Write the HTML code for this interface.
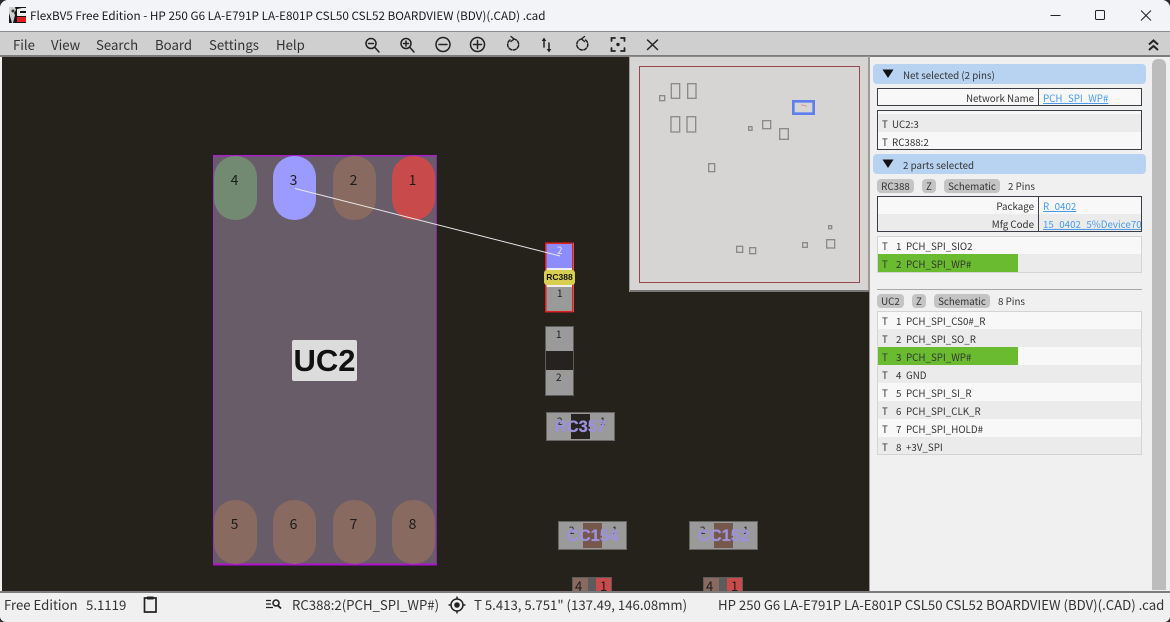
<!DOCTYPE html>
<html><head><meta charset="utf-8">
<style>
html,body{margin:0;padding:0;width:1170px;height:622px;overflow:hidden;background:#2a2a2a}
*{box-sizing:border-box}
#w{position:absolute;left:0;top:0;width:1170px;height:622px;background:#f0f0f0;overflow:hidden;border-radius:8px 8px 6px 6px;font-family:"Noto Sans CJK JP","Liberation Sans",sans-serif;color:#222}
.a{position:absolute;white-space:nowrap}
.r{position:absolute}
.m{top:35px;font-size:13.2px;line-height:20px;color:#333}
.s{font-size:9.75px;line-height:14px;color:#333}
.l{font-size:9.75px;line-height:14px;color:#4a9bea;text-decoration:underline}
.b{position:absolute;height:14px;background:#c4c4c4;border-radius:4px;font-size:9.75px;line-height:15px;text-align:center;color:#333}
.row{position:absolute;left:878px;width:263px;height:18px}
.row span{position:absolute;top:2px;font-size:9.75px;line-height:14px;color:#333;white-space:nowrap}
.st{font-size:13.2px;line-height:18px;color:#333;top:596px}
.pn{position:absolute;width:43px;height:64px;border-radius:21px;font-size:14px;line-height:18px;text-align:center;padding-top:15px;padding-right:2px;color:#1c1c1c;background:#896a60}
.pc{position:absolute;height:29px;width:69px;background:#9a9a9a;border:1px solid #666664}
.pc i{position:absolute;left:24px;top:1px;width:19px;height:25px}
.pc b{position:absolute;left:0;width:67px;top:2px;text-align:center;font:bold 16.500px/24px "Liberation Sans",sans-serif;color:#9c92da;-webkit-text-stroke:.3px #9c92da}
.pc u{position:absolute;top:2px;font-size:10px;line-height:12px;text-decoration:none;color:#1c1c1c}
</style></head><body><div id="w">

<!-- title bar -->
<div class="r" style="left:0;top:0;width:1170px;height:31px;background:#f3f4f7"></div>
<svg class="r" style="left:9px;top:7px" width="17" height="16" viewBox="0 0 17 16"><rect width="17" height="16" fill="#151515"/><path d="M0 0h6l1 3-2 3 1 2-2 8H3L0 6z" fill="#cfcfcf"/><circle cx="4" cy="4" r="1.500" fill="#333"/><path d="M8 2l5-1h4v3h-6v2h6v3H8z" fill="#eee"/><rect x="8" y="10" width="9" height="5" fill="#e02020"/></svg>
<div class="a" style="left:30px;top:7px;font-size:11.7px;line-height:18px;color:#1a1a1a">FlexBV5 Free Edition - HP 250 G6 LA-E791P LA-E801P CSL50 CSL52 BOARDVIEW (BDV)(.CAD) .cad</div>
<svg class="r" style="left:1040px;top:0" width="130" height="31" viewBox="0 0 130 31" fill="none" stroke="#222" stroke-width="1"><path d="M10.500 15.500h10"/><rect x="55.500" y="10.500" width="9" height="9" rx="1.200"/><path d="M101 10.500l10 10M111 10.500l-10 10"/></svg>

<!-- menu bar -->
<div class="r" style="left:0;top:31px;width:1170px;height:26px;background:#cfcfcf;border-top:1px solid #8a8a8a;border-bottom:2px solid #7c7c7c"></div>
<div class="a m" style="left:13px">File</div>
<div class="a m" style="left:51px">View</div>
<div class="a m" style="left:96px">Search</div>
<div class="a m" style="left:155px">Board</div>
<div class="a m" style="left:209px">Settings</div>
<div class="a m" style="left:276px">Help</div>
<svg class="r" style="left:360px;top:34px" width="310" height="22" viewBox="0 0 310 22" fill="none" stroke="#222" stroke-width="1.500" stroke-linecap="round">
<circle cx="11" cy="9.500" r="5"/><path d="M15 13.500l4 4.500M8.500 9.500h5"/>
<circle cx="46" cy="9.500" r="5"/><path d="M50 13.500l4 4.500M43.500 9.500h5M46 7v5"/>
<circle cx="83" cy="10.500" r="7"/><path d="M79 10.500h8"/>
<circle cx="117.500" cy="10.500" r="7"/><path d="M113.500 10.500h8M117.500 6.500v8"/>
<path d="M153.500 5a5.500 5.500 0 1 1-3.500 1" stroke-dasharray="3 1.600"/><path d="M151 2.500l3 2.500-3 2.500" stroke-width="1.400"/>
<path d="M184 13V6M189 9v7" stroke-width="1.500"/><path d="M184 3.500l-2.300 3.500h4.600zM189 18.500l-2.300-3.500h4.600z" fill="#222" stroke="none"/>
<path d="M222 5a5.500 5.500 0 1 0 3.500 1" stroke-dasharray="3 1.600"/><path d="M224.500 2.500l-3 2.500 3 2.500" stroke-width="1.400"/>
<path d="M251.500 7V4h3.500M261 4h3.500v3M264.500 14v3h-3.500M255 17h-3.500v-3" stroke-width="1.800"/><circle cx="258" cy="10.500" r="1.700" fill="#222" stroke="none"/>
<path d="M287.500 6l10 9.500M297.500 6l-10 9.500"/></svg>
<svg class="r" style="left:1146px;top:37px" width="16" height="16" viewBox="0 0 16 16" fill="none" stroke="#222" stroke-width="2"><path d="M3 7.500l4.500-4 4.500 4M3 13l4.500-4 4.500 4"/></svg>

<!-- canvas -->
<div class="r" style="left:2px;top:57px;width:867px;height:534px;background:#25221c"></div>

<!-- UC2 -->
<div class="r" style="left:213px;top:155px;width:223px;height:410px;background:#685c68"></div>
<svg class="r" style="left:212px;top:154px" width="226" height="413" fill="none"><path d="M1.700 2v409.500M224 2v409.500" stroke="#8c3fae" stroke-width="1.400"/><path d="M1 1.750h224" stroke="#a820c8" stroke-width="1.500"/><path d="M1 410.500h224" stroke="#b010d0" stroke-width="2"/></svg>
<div class="pn" style="left:214px;top:156px;background:#728a72">4</div>
<div class="pn" style="left:273px;top:156px;background:#9a9aff">3</div>
<div class="pn" style="left:333px;top:156px">2</div>
<div class="pn" style="left:392px;top:156px;background:#c94a4a">1</div>
<div class="pn" style="left:214px;top:500px">5</div>
<div class="pn" style="left:273px;top:500px">6</div>
<div class="pn" style="left:333px;top:500px">7</div>
<div class="pn" style="left:392px;top:500px">8</div>
<div class="a" style="left:292px;top:340px;width:65px;height:41px;background:#dcdcdc;border-radius:2px;text-align:center;font:bold 31px/41px 'Liberation Sans',sans-serif;color:#111">UC2</div>

<!-- RC388 -->
<div class="r" style="left:545px;top:243px;width:29px;height:69px;background:#9a9a9a"></div>
<div class="r" style="left:546px;top:244px;width:27px;height:24px;background:#8c8cff"></div>
<div class="r" style="left:546px;top:268px;width:27px;height:19px;background:#efefef"></div>
<svg class="r" style="left:544px;top:242px" width="32" height="72"><rect x="1.750" y="1.200" width="27" height="68.500" fill="none" stroke="#e02020" stroke-width="1.500"/></svg>
<div class="a" style="left:557px;top:243px;font-size:10px;line-height:13px;color:#e8e8ff">2</div>
<div class="a" style="left:557px;top:286px;font-size:10px;line-height:13px;color:#1c1c1c">1</div>
<div class="a" style="left:544px;top:270px;width:31px;height:15px;background:#d8cf50;border-radius:3px;text-align:center;font:bold 8.500px/15px 'Liberation Sans',sans-serif;color:#111">RC388</div>

<!-- second vertical -->
<div class="r" style="left:545px;top:326px;width:29px;height:70px;background:#9a9a9a;border:1px solid #5c5c5a"></div>
<div class="r" style="left:546px;top:351px;width:27px;height:19px;background:#25221f"></div>
<div class="a" style="left:556px;top:327px;font-size:10px;line-height:13px;color:#1c1c1c">1</div>
<div class="a" style="left:556px;top:370px;font-size:10px;line-height:13px;color:#1c1c1c">2</div>

<!-- RC357 -->
<div class="pc" style="left:546px;top:412px"><i style="background:#25221f"></i><u style="left:10px">2</u><u style="left:53px">1</u><b>RC357</b></div>
<!-- CC154 / CC152 -->
<div class="pc" style="left:558px;top:521px"><i style="background:#75574c"></i><u style="left:10px">2</u><u style="left:53px">1</u><b>CC154</b></div>
<div class="pc" style="left:689px;top:521px"><i style="background:#75574c"></i><u style="left:10px">2</u><u style="left:53px">1</u><b>CC152</b></div>

<!-- bottom parts -->
<div class="r" style="left:572px;top:577px;width:40px;height:14px;background:#5c5c5c;border:1px solid #5c5c5a;border-bottom:0"></div>
<div class="r" style="left:573px;top:578px;width:15px;height:13px;background:#896a60"></div>
<div class="r" style="left:596px;top:578px;width:15px;height:13px;background:#c94a4a"></div>
<div class="a" style="left:575px;top:577px;font-size:13px;line-height:18px;color:#1c1c1c">4</div>
<div class="a" style="left:600px;top:577px;font-size:13px;line-height:18px;color:#1c1c1c">1</div>
<div class="r" style="left:703px;top:577px;width:40px;height:14px;background:#5c5c5c;border:1px solid #5c5c5a;border-bottom:0"></div>
<div class="r" style="left:704px;top:578px;width:15px;height:13px;background:#896a60"></div>
<div class="r" style="left:727px;top:578px;width:15px;height:13px;background:#c94a4a"></div>
<div class="a" style="left:706px;top:577px;font-size:13px;line-height:18px;color:#1c1c1c">4</div>
<div class="a" style="left:731px;top:577px;font-size:13px;line-height:18px;color:#1c1c1c">1</div>

<!-- net line -->
<svg class="r" style="left:0;top:0" width="870" height="400"><path d="M295 188.500L560 256" stroke="#e8e8e8" stroke-width="1"/></svg>

<!-- minimap -->
<div class="r" style="left:629px;top:56px;width:1px;height:236px;background:#9a9a9a"></div>
<svg class="r" style="left:630px;top:56px" width="240" height="236" viewBox="0 0 720 708">
<rect x="0" y="3" width="720" height="705" fill="#d6d5d3"/>
<rect x="0" y="0" width="720" height="3" fill="#8a8a8a"/>
<rect x="714" y="0" width="6" height="708" fill="#9a9a9a"/>
<rect x="0" y="702" width="720" height="6" fill="#777"/>
<rect x="28.500" y="31.500" width="660" height="648" fill="none" stroke="#934a4c" stroke-width="3"/>
<g fill="none" stroke="#8a8a8a" stroke-width="4">
<rect x="89" y="119" width="15" height="15"/>
<rect x="124" y="83" width="25" height="44"/>
<rect x="173" y="83" width="25" height="44"/>
<rect x="123" y="182" width="26" height="46"/>
<rect x="171" y="182" width="26" height="46"/>
<rect x="356" y="212" width="10" height="11"/>
<rect x="398" y="194" width="24" height="24"/>
<rect x="449" y="218" width="26" height="32"/>
<rect x="236" y="323" width="18" height="24"/>
<rect x="596" y="509" width="9" height="9"/>
<rect x="590" y="551" width="24" height="25"/>
<rect x="518" y="560" width="14" height="14"/>
<rect x="320" y="571" width="18" height="18"/>
<rect x="359" y="575" width="18" height="18"/>
</g>
<rect x="490" y="136" width="61" height="37" fill="none" stroke="#5f7ff0" stroke-width="8"/>
<path d="M514 146l16 5" stroke="#e08a90" stroke-width="3"/>
</svg>

<!-- right panel -->
<div class="r" style="left:869px;top:57px;width:301px;height:534px;background:#f0f0f0;border-left:1px solid #9a9a9a"></div>
<div class="r" style="left:1152px;top:59px;width:14px;height:531px;background:#bcbcbc;border-radius:6px 6px 0 0"></div>

<div class="r" style="left:873px;top:64px;width:273px;height:20px;background:#b8d3f1;border-radius:4px"></div>
<svg class="r" style="left:882px;top:69px" width="12" height="10"><path d="M0.500 0.500h11L6 9z" fill="#111"/></svg>
<div class="a s" style="left:903px;top:68px">Net selected (2 pins)</div>

<div class="r" style="left:877px;top:88px;width:265px;height:18px;background:#f8f8f8;border:1px solid #3a3d44"></div>
<div class="r" style="left:1038px;top:88px;width:1px;height:18px;background:#3a3d44"></div>
<div class="a s" style="right:136px;top:91px">Network Name</div>
<div class="a l" style="left:1043px;top:91px">PCH_SPI_WP#</div>

<div class="r" style="left:877px;top:110px;width:265px;height:40px;background:#f8f8f8;border:1px solid #3a3d44"></div>
<div class="r" style="left:878px;top:114px;width:263px;height:18px;background:#ebebeb"></div>
<div class="a s" style="left:882px;top:117px">T</div><div class="a s" style="left:892px;top:117px">UC2:3</div>
<div class="a s" style="left:882px;top:135px">T</div><div class="a s" style="left:892px;top:135px">RC388:2</div>

<div class="r" style="left:873px;top:154px;width:273px;height:20px;background:#b8d3f1;border-radius:4px"></div>
<svg class="r" style="left:882px;top:159px" width="12" height="10"><path d="M0.500 0.500h11L6 9z" fill="#111"/></svg>
<div class="a s" style="left:903px;top:158px">2 parts selected</div>

<div class="b" style="left:877px;top:178.500px;width:37px">RC388</div>
<div class="b" style="left:922px;top:178.500px;width:14px">Z</div>
<div class="b" style="left:944px;top:178.500px;width:56px">Schematic</div>
<div class="a s" style="left:1008px;top:179px">2 Pins</div>

<div class="r" style="left:877px;top:196px;width:265px;height:36px;background:#f8f8f8;border:1px solid #3a3d44"></div>
<div class="r" style="left:878px;top:214px;width:263px;height:17px;background:#ebebeb"></div>
<div class="r" style="left:1038px;top:196px;width:1px;height:36px;background:#3a3d44"></div>
<div class="a s" style="right:136px;top:199px">Package</div>
<div class="a l" style="left:1043px;top:199px">R_0402</div>
<div class="a s" style="right:136px;top:217px">Mfg Code</div>
<div class="a l" style="left:1043px;top:217px;width:98px;overflow:hidden">15_0402_5%Device700</div>

<div class="r" style="left:877px;top:236px;width:265px;height:37px;background:#f8f8f8;border:1px solid #d4d4d4"></div>
<div class="row" style="top:254px;background:#ebebeb;height:18px"></div>
<div class="r" style="left:878px;top:254px;width:140px;height:18px;background:#6abb30"></div>
<div class="row" style="top:237px"><span style="left:4px">T</span><span style="left:18px">1</span><span style="left:28px">PCH_SPI_SIO2</span></div>
<div class="row" style="top:255px"><span style="left:4px">T</span><span style="left:18px">2</span><span style="left:28px">PCH_SPI_WP#</span></div>

<div class="r" style="left:877px;top:289px;width:265px;height:1px;background:#a8a8a8"></div>

<div class="b" style="left:877px;top:293.500px;width:27px">UC2</div>
<div class="b" style="left:912px;top:293.500px;width:14px">Z</div>
<div class="b" style="left:934px;top:293.500px;width:56px">Schematic</div>
<div class="a s" style="left:998px;top:294px">8 Pins</div>

<div class="r" style="left:877px;top:311px;width:265px;height:144px;background:#f8f8f8;border:1px solid #d4d4d4"></div>
<div class="row" style="top:329px;background:#ebebeb"></div>
<div class="row" style="top:365px;background:#ebebeb"></div>
<div class="row" style="top:401px;background:#ebebeb"></div>
<div class="row" style="top:437px;background:#ebebeb;height:17px"></div>
<div class="r" style="left:878px;top:347px;width:140px;height:18px;background:#6abb30"></div>
<div class="row" style="top:312px"><span style="left:4px">T</span><span style="left:18px">1</span><span style="left:28px">PCH_SPI_CS0#_R</span></div>
<div class="row" style="top:330px"><span style="left:4px">T</span><span style="left:18px">2</span><span style="left:28px">PCH_SPI_SO_R</span></div>
<div class="row" style="top:348px"><span style="left:4px">T</span><span style="left:18px">3</span><span style="left:28px">PCH_SPI_WP#</span></div>
<div class="row" style="top:366px"><span style="left:4px">T</span><span style="left:18px">4</span><span style="left:28px">GND</span></div>
<div class="row" style="top:384px"><span style="left:4px">T</span><span style="left:18px">5</span><span style="left:28px">PCH_SPI_SI_R</span></div>
<div class="row" style="top:402px"><span style="left:4px">T</span><span style="left:18px">6</span><span style="left:28px">PCH_SPI_CLK_R</span></div>
<div class="row" style="top:420px"><span style="left:4px">T</span><span style="left:18px">7</span><span style="left:28px">PCH_SPI_HOLD#</span></div>
<div class="row" style="top:438px"><span style="left:4px">T</span><span style="left:18px">8</span><span style="left:28px">+3V_SPI</span></div>

<!-- status bar -->
<div class="r" style="left:0;top:591px;width:1170px;height:31px;background:#f0f0f0;border-top:2px solid #7c7c7c"></div>
<div class="a st" style="left:4px">Free Edition</div>
<div class="a st" style="left:86px">5.1119</div>
<svg class="r" style="left:142px;top:595px" width="17" height="19" viewBox="0 0 17 19" fill="none" stroke="#222" stroke-width="1.700"><path d="M5 3H2.500v14h11.500V3H11.500"/><rect x="5" y="1.500" width="6.500" height="3" fill="#222" stroke="none"/></svg>
<svg class="r" style="left:265px;top:598px" width="18" height="13" viewBox="0 0 18 13" fill="none" stroke="#222" stroke-width="1.300"><path d="M1 2.500h5M1 6h5M1 9.500h7"/><circle cx="11" cy="5" r="3" stroke-width="1.600"/><path d="M13 7.500l3 3" stroke-width="1.800"/></svg>
<div class="a st" style="left:292px">RC388:2(PCH_SPI_WP#)</div>
<svg class="r" style="left:448px;top:596px" width="18" height="18" viewBox="0 0 18 18" fill="none" stroke="#222" stroke-width="1.500"><circle cx="9" cy="9" r="6"/><circle cx="9" cy="9" r="2.800" fill="#222" stroke="none"/><path d="M9 0.500v2.500M9 15v2.500M0.500 9H3M15 9h2.500"/></svg>
<div class="a st" style="left:474px">T 5.413, 5.751" (137.49, 146.08mm)</div>
<div class="a st" style="left:718px">HP 250 G6 LA-E791P LA-E801P CSL50 CSL52 BOARDVIEW (BDV)(.CAD) .cad</div>
</div></body></html>
